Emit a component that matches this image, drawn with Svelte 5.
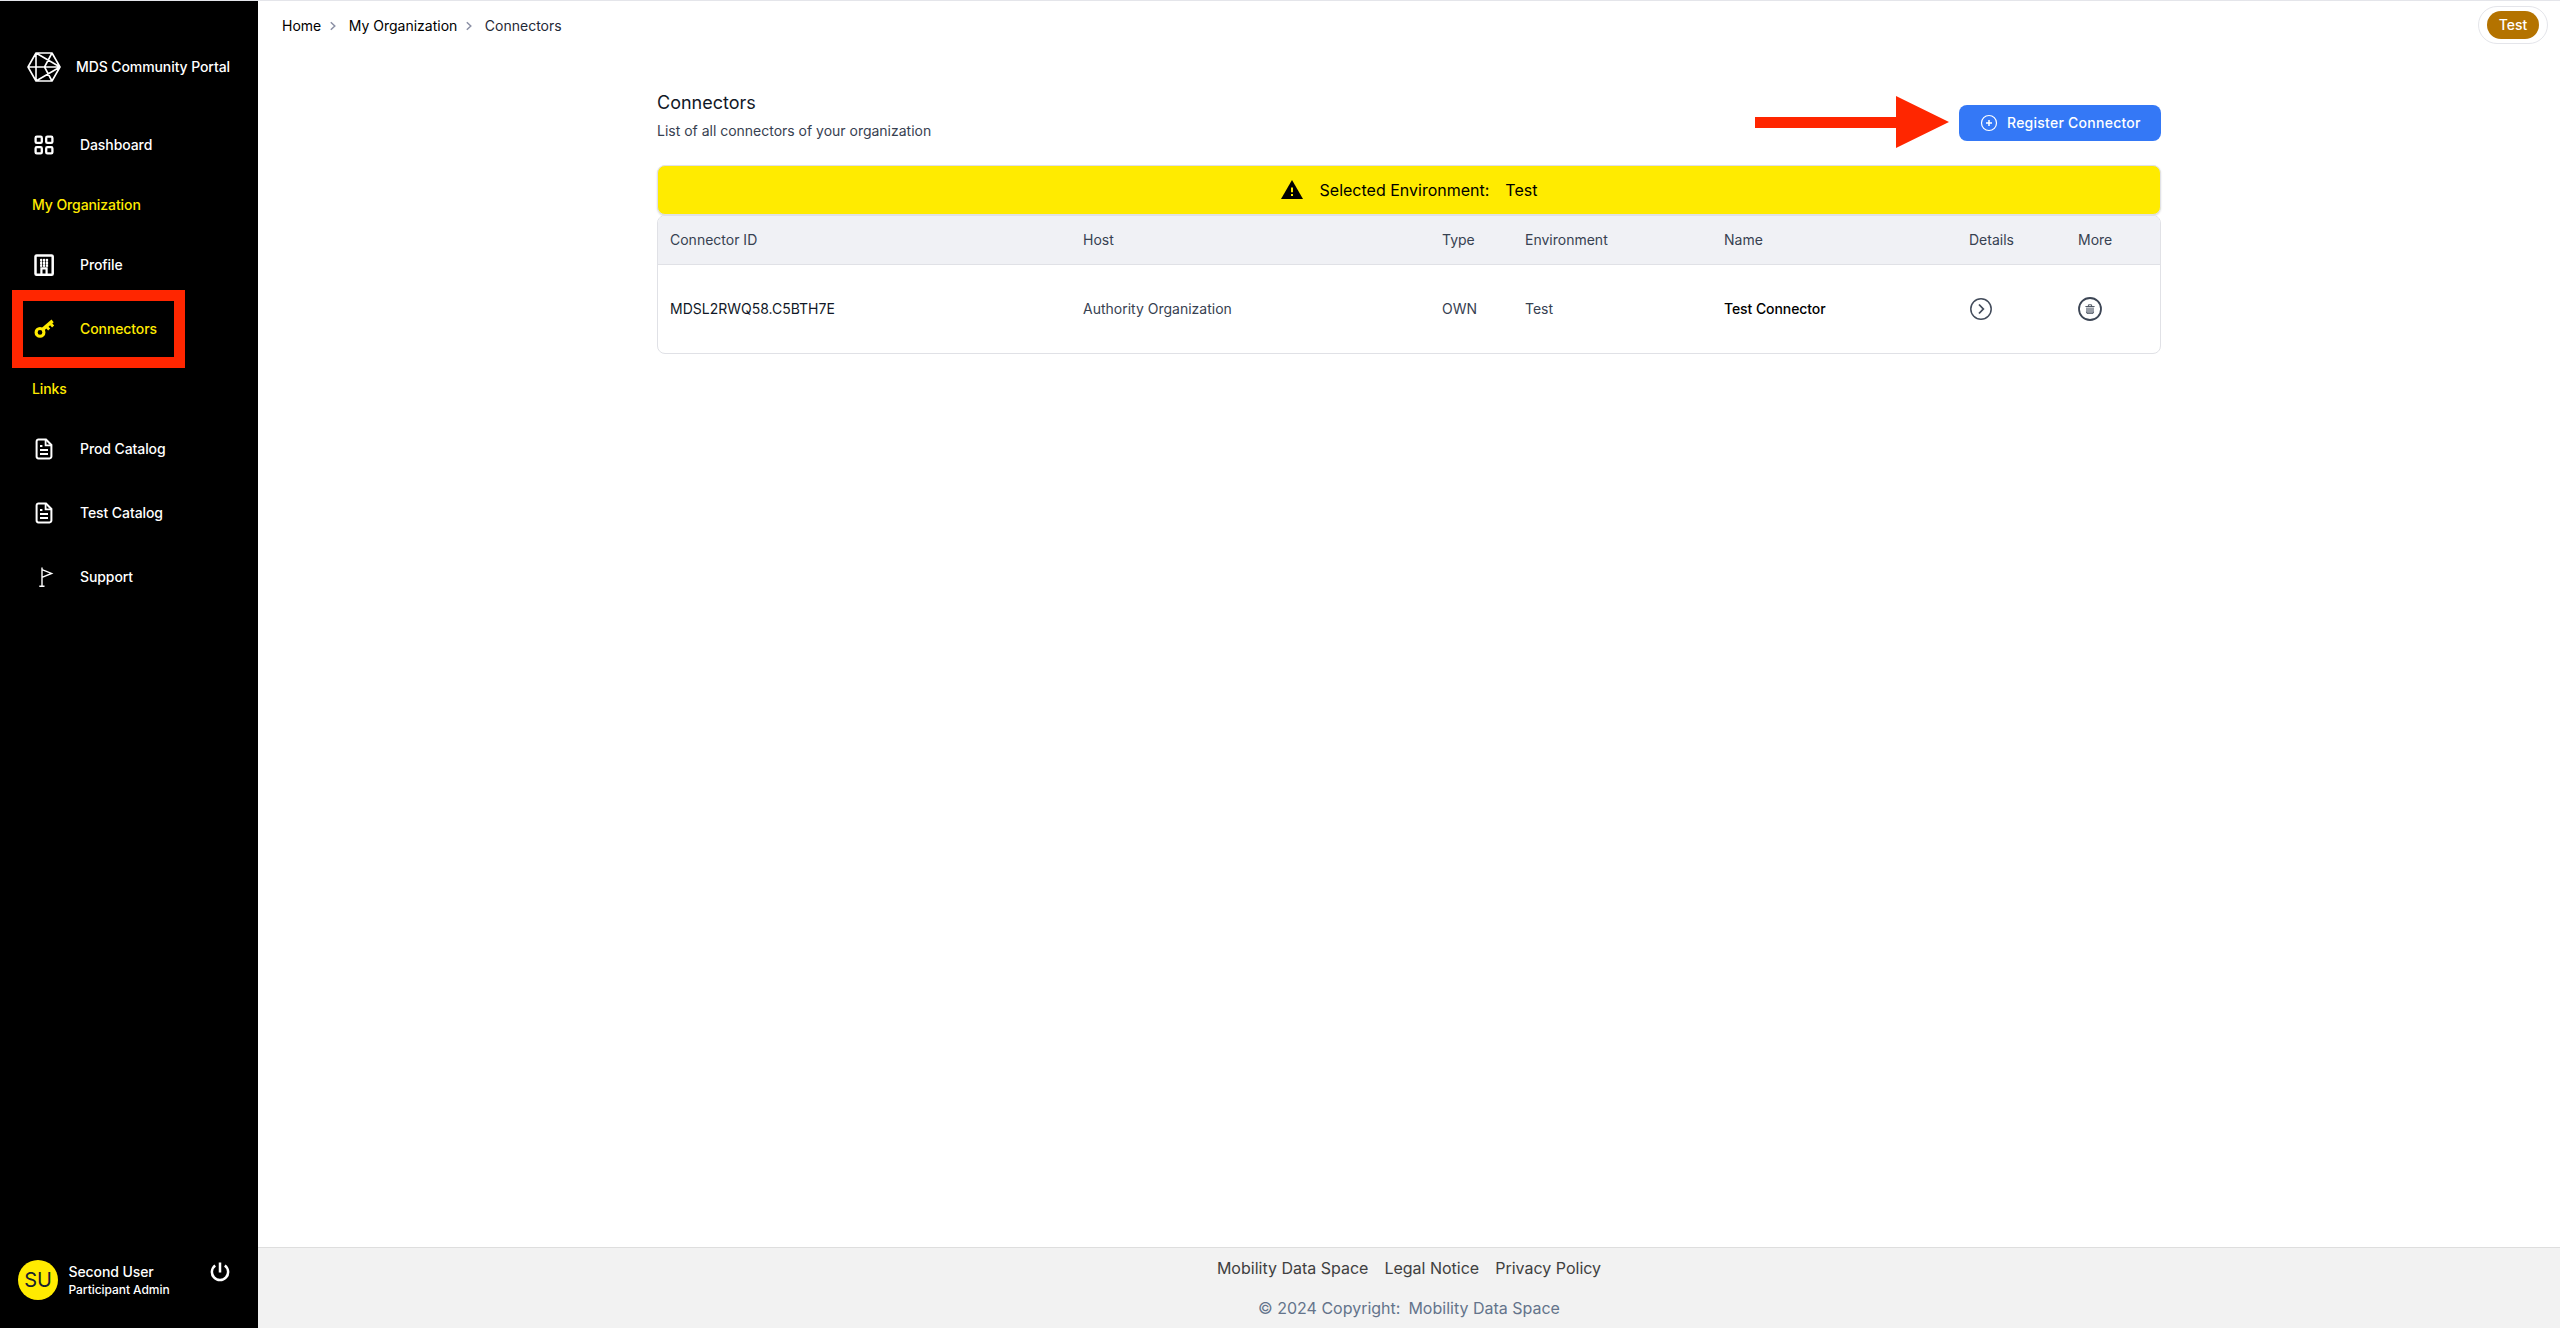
<script>
  const columns = ['Connector ID', 'Host', 'Type', 'Environment', 'Name', 'Details', 'More'];
  const connector = {
    id: 'MDSL2RWQ58.C5BTH7E',
    host: 'Authority Organization',
    type: 'OWN',
    environment: 'Test',
    name: 'Test Connector'
  };
  const footerLinks = ['Mobility Data Space', 'Legal Notice', 'Privacy Policy'];
</script>

{#snippet doc()}
  <svg class="icon" viewBox="0 0 24 24" fill="none" stroke="currentColor" stroke-width="2">
    <path d="M6.5 2.6H14L19.4 8v11.6a1.8 1.8 0 0 1-1.8 1.8H6.4a1.8 1.8 0 0 1-1.8-1.8V4.4a1.8 1.8 0 0 1 1.9-1.8z" />
    <path d="M13.6 3v5.4H19M8 9h2.4M8 13h8M8 17h8" stroke-width="1.8" />
  </svg>
{/snippet}

{#snippet chevron()}
  <svg class="chevron" viewBox="0 0 8 10" fill="none" stroke="#8b90a5" stroke-width="1.5"><path d="M1.8 1.2 5.8 5 1.8 8.8" /></svg>
{/snippet}

<div class="app">
  <aside>
    <div class="brand">
      <svg class="logo" viewBox="0 0 34 30" fill="none" stroke="#fff" stroke-width="1.6" stroke-linejoin="round">
        <path d="M9 1h16l8 14-8 14H9L1 15zM9 1v28M1 15h32M9 1l24 14M9 29l24-14M25 1l-7.5 14L25 29" />
      </svg>
      <span>MDS Community Portal</span>
    </div>
    <nav>
      <div class="item">
        <svg class="icon" viewBox="0 0 24 24" fill="none" stroke="currentColor" stroke-width="2.3">
          <rect x="3.6" y="3.7" width="6.2" height="6.2" rx="1.2" /><rect x="14.2" y="3.7" width="6.2" height="6.2" rx="1.2" />
          <rect x="3.6" y="14.2" width="6.2" height="6.2" rx="1.2" /><rect x="14.2" y="14.2" width="6.2" height="6.2" rx="1.2" />
        </svg>
        <span>Dashboard</span>
      </div>
      <h2>My Organization</h2>
      <div class="item">
        <svg class="icon" viewBox="0 0 24 24" fill="none" stroke="currentColor" stroke-width="2.5">
          <rect x="3.5" y="2.5" width="17.2" height="19.2" rx="1" />
          <path d="M9.4 22v-6.6h5.2V22" stroke-width="2.2" />
          <path d="M8.1 7h2.2M11 7h2.2M13.9 7h2.2M8.1 9.9h2.2M11 9.9h2.2M13.9 9.9h2.2M8.1 12.7h2.2M11 12.7h2.2M13.9 12.7h2.2" stroke-width="2.2" />
          <path d="M9.2 5.8v8M12.1 5.8v8M15 5.8v8" stroke-width="1.2" />
        </svg>
        <span>Profile</span>
      </div>
      <div class="item active">
        <svg class="icon" viewBox="0 0 24 24" fill="none" stroke="currentColor">
          <circle cx="8" cy="15.4" r="3.9" stroke-width="3.1" />
          <path d="M10.7 12.4 20.6 3.9" stroke-width="3.4" />
          <path d="M13.8 8.9l3.4 3.6M17.8 5.8l3.3 3.7" stroke-width="2.8" />
        </svg>
        <span>Connectors</span>
        <div class="highlight"></div>
      </div>
      <h2>Links</h2>
      <div class="item">{@render doc()}<span>Prod Catalog</span></div>
      <div class="item">{@render doc()}<span>Test Catalog</span></div>
      <div class="item">
        <svg class="icon" viewBox="0 0 24 24" fill="none" stroke="currentColor" stroke-width="1.4">
          <path d="M10 2.4v18.8M7.3 21.2h5.2M10 4.6l9.6 3.8L10 12.4" />
        </svg>
        <span>Support</span>
      </div>
    </nav>
    <div class="user">
      <div class="avatar">SU</div>
      <div class="who">
        <span class="name">Second User</span>
        <span class="role">Participant Admin</span>
      </div>
      <svg class="power" viewBox="0 0 20 20" fill="none" stroke="#fff" stroke-width="2.5">
        <path d="M10 .6v10M5.2 3.5a8.1 8.1 0 1 0 9.6 0" />
      </svg>
    </div>
  </aside>

  <div class="page">
    <header>
      <div class="crumbs">
        <span>Home</span>{@render chevron()}<span>My Organization</span>{@render chevron()}<span class="current">Connectors</span>
      </div>
      <div class="env"><span>Test</span></div>
    </header>

    <main>
      <div class="heading">
        <div class="titles">
          <h1>Connectors</h1>
          <p>List of all connectors of your organization</p>
        </div>
        <button>
          <svg class="plus" viewBox="0 0 18 18" fill="none" stroke="#fff" stroke-width="1.2">
            <circle cx="9" cy="9" r="7.5" /><path d="M9 6v6M6 9h6" stroke-width="1.5" />
          </svg>
          <span>Register Connector</span>
        </button>
        <svg class="arrow" viewBox="0 0 194 54" fill="#ff2600"><path d="M0 22h141V1l53 26-53 26V33H0z" /></svg>
      </div>

      <div class="banner">
        <svg class="warn" viewBox="0 0 22 19"><path d="M11 0 22 19H0z" fill="#000" /><path d="M10 7.6h2v4.6h-2zM10 14h2v2h-2z" fill="#ffeb00" /></svg>
        <span class="label">Selected Environment:</span>
        <span>Test</span>
      </div>

      <div class="table">
        <div class="row head">
          {#each columns as column}<div>{column}</div>{/each}
        </div>
        <div class="row body">
          <div class="dark">{connector.id}</div>
          <div>{connector.host}</div>
          <div>{connector.type}</div>
          <div>{connector.environment}</div>
          <div class="strong">{connector.name}</div>
          <div>
            <svg class="details" viewBox="0 0 24 24" fill="none" stroke="#434c5b" stroke-width="1.5">
              <circle cx="12" cy="12" r="10.2" /><path d="M10 7.5 14.3 12 10 16.5" stroke-width="1.8" />
            </svg>
          </div>
          <div>
            <svg class="trash" viewBox="0 0 24 24" fill="none" stroke="#3d4655">
              <circle cx="12" cy="12" r="11" stroke-width="1.8" />
              <path d="M7.4 9.5h9.2M10.4 9.3V7.8h3.2v1.5" stroke-width=".9" />
              <path d="M8 10.6h8V14.6l-.5 1.6H8.5l-.5-1.6z" fill="#9a9fa8" stroke="none" />
              <path d="M8.4 14.8 9 16.4h6l.6-1.6" stroke-width=".8" />
            </svg>
          </div>
        </div>
      </div>
    </main>

    <footer>
      <div class="links">{#each footerLinks as link}<span>{link}</span>{/each}</div>
      <div class="copy"><span>© 2024 Copyright:</span><span>Mobility Data Space</span></div>
    </footer>
  </div>
</div>

<style>
  :global(body) { margin: 0; background: #fff; }
  .app {
    box-sizing: border-box;
    display: flex;
    height: 1328px;
    border-top: 1px solid #e4e5ea;
    font-family: Inter, "Liberation Sans", sans-serif;
    font-size: 14px;
    line-height: 20px;
    color: #374151;
    overflow: hidden;
  }
  * { box-sizing: border-box; }
  svg { display: block; flex: none; }

  aside { width: 258px; flex: none; display: flex; flex-direction: column; background: #000; color: #fff; font-weight: 500; letter-spacing: -.09px; }
  .brand { display: flex; align-items: flex-start; gap: 15px; height: 112px; padding: 50px 0 0 27px; white-space: nowrap; }
  .logo { width: 34px; height: 30px; margin-top: 1px; }
  .brand span { line-height: 32px; }
  nav { flex: 1; }
  .item { position: relative; height: 64px; display: flex; align-items: center; gap: 24px; padding-left: 32px; }
  .icon { width: 24px; height: 24px; }
  .active, h2 { color: #ffeb00; }
  h2 { margin: 0; height: 56px; padding-left: 32px; font-size: 14px; font-weight: 500; line-height: 56px; }
  .highlight { position: absolute; left: 12px; top: -7px; width: 173px; height: 78px; border: 11px solid #ff2600; }
  .user { display: flex; height: 75px; padding-left: 18px; }
  .avatar { width: 40px; height: 40px; margin-top: 7px; border-radius: 50%; background: #ffeb00; color: #17202e; font-size: 20px; font-weight: 400; line-height: 40px; text-align: center; }
  .who { width: 131px; margin: 9px 0 0 10.5px; display: flex; flex-direction: column; white-space: nowrap; }
  .name { line-height: 20px; }
  .role { font-size: 12px; line-height: 16px; letter-spacing: -.05px; }
  .power { width: 20px; height: 20px; margin: 9px 0 0 10.5px; }

  .page { flex: 1; display: flex; flex-direction: column; }
  header { display: flex; justify-content: space-between; height: 50px; padding: 5px 12px 0 24px; color: #000; }
  .crumbs { display: flex; align-items: center; height: 40px; }
  .chevron { width: 8px; height: 10px; margin: 0 11.5px 0 8px; }
  .current { color: #1f2937; }
  .env { width: 70px; height: 38px; padding: 4px 8px; border: 1px solid #e4e5ea; border-radius: 19px; }
  .env span { display: block; height: 28px; border-radius: 14px; background: #b47300; color: #fff; font-weight: 500; line-height: 27px; text-align: center; }

  main { flex: 1; width: 1504px; margin: 0 auto; padding-top: 36px; }
  .heading { position: relative; display: flex; justify-content: space-between; height: 78px; }
  h1 { margin: 2px 0 4px; font-size: 18px; font-weight: 400; line-height: 28px; color: #111827; }
  p { margin: 0; letter-spacing: -.01px; }
  button { display: flex; align-items: center; gap: 9px; width: 202px; height: 36px; margin-top: 18px; padding: 0 0 0 21px; border: 0; border-radius: 8px; background: #3478f6; color: #fff; font: 500 14px/20px Inter, "Liberation Sans", sans-serif; letter-spacing: .25px; white-space: nowrap; }
  .plus { width: 18px; height: 18px; }
  .arrow { position: absolute; left: 1098px; top: 8px; width: 194px; height: 54px; }

  .banner { display: flex; align-items: center; justify-content: center; height: 50px; border: 1px solid #e0e1e6; border-radius: 8px; background: #ffeb00; color: #000; font-size: 16px; box-shadow: 0 1px 2px #0002; }
  .warn { width: 22px; height: 19px; margin: -1px 17px 0 0; }
  .label { margin-right: 16px; }

  .table { border: 1px solid #e0e1e6; border-radius: 8px; overflow: hidden; }
  .row { display: grid; grid-template-columns: 413px 359px 83px 199px 245px 109px 1fr; align-items: center; }
  .row > div { padding-left: 12px; }
  .head { height: 49px; background: #f0f1f5; border-bottom: 1px solid #e0e1e6; }
  .body { height: 88px; }
  .dark { color: #111827; }
  .row .strong { color: #000; font-weight: 500; letter-spacing: -.08px; }
  .details, .trash { width: 24px; height: 24px; }

  footer { height: 81px; border-top: 1px solid #dedede; background: #f2f2f2; font-size: 16px; color: #404040; }
  .links, .copy { display: flex; justify-content: center; height: 40px; line-height: 40px; }
  .links { gap: 16px; }
  .copy { gap: 8px; color: #64748b; }
</style>
